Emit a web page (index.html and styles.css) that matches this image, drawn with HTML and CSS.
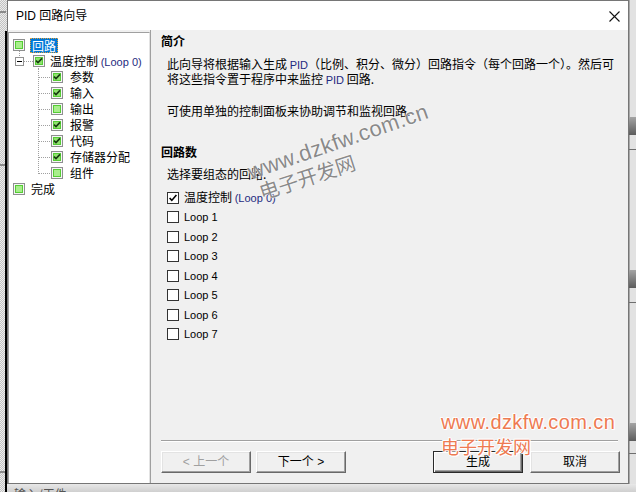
FILE: index.html
```html
<!DOCTYPE html>
<html>
<head>
<meta charset="utf-8">
<title>PID 回路向导</title>
<link rel="stylesheet" href="styles.css">
</head>
<body>
<div class="screen">
  <div class="left-strip"></div>

  <div class="dialog">
    <div class="titlebar">
      <span class="title">PID 回路向导</span>
      <svg class="close" width="11" height="11" viewBox="0 0 11 11"><path d="M0.5 0.5 L10.5 10.5 M10.5 0.5 L0.5 10.5" stroke="#111" stroke-width="1.1" fill="none"/></svg>
    </div>

    <div class="body">
      <div class="tree">
        <div class="row root first">
          <svg class="ti" width="12" height="12" viewBox="0 0 12 12"><rect x=".5" y=".5" width="11" height="11" fill="#f6f6f6" stroke="#8e8f8f"/><rect x="2" y="2" width="8" height="8" fill="#56cc36"/><rect x="3" y="3" width="6" height="6" fill="#a8ee8c"/></svg>
          <span class="label sel">回路</span>
        </div>
        <div class="row group">
          <span class="expander"></span>
          <svg class="ti" width="12" height="12" viewBox="0 0 12 12"><rect x=".5" y=".5" width="11" height="11" fill="#f6f6f6" stroke="#8e8f8f"/><rect x="2" y="2" width="8" height="8" fill="#56cc36"/><rect x="3" y="3" width="6" height="6" fill="#8fe26e"/><path d="M3 5.6 L5 7.6 L9 3.4" fill="none" stroke="#173a10" stroke-width="1.6"/></svg>
          <span class="label">温度控制 <span class="lat navy">(Loop 0)</span></span>
        </div>
        <div class="row child">
          <svg class="ti" width="12" height="12" viewBox="0 0 12 12"><rect x=".5" y=".5" width="11" height="11" fill="#f6f6f6" stroke="#8e8f8f"/><rect x="2" y="2" width="8" height="8" fill="#56cc36"/><rect x="3" y="3" width="6" height="6" fill="#8fe26e"/><path d="M3 5.6 L5 7.6 L9 3.4" fill="none" stroke="#173a10" stroke-width="1.6"/></svg>
          <span class="label">参数</span>
        </div>
        <div class="row child">
          <svg class="ti" width="12" height="12" viewBox="0 0 12 12"><rect x=".5" y=".5" width="11" height="11" fill="#f6f6f6" stroke="#8e8f8f"/><rect x="2" y="2" width="8" height="8" fill="#56cc36"/><rect x="3" y="3" width="6" height="6" fill="#8fe26e"/><path d="M3 5.6 L5 7.6 L9 3.4" fill="none" stroke="#173a10" stroke-width="1.6"/></svg>
          <span class="label">输入</span>
        </div>
        <div class="row child">
          <svg class="ti" width="12" height="12" viewBox="0 0 12 12"><rect x=".5" y=".5" width="11" height="11" fill="#f6f6f6" stroke="#8e8f8f"/><rect x="2" y="2" width="8" height="8" fill="#56cc36"/><rect x="3" y="3" width="6" height="6" fill="#a8ee8c"/></svg>
          <span class="label">输出</span>
        </div>
        <div class="row child">
          <svg class="ti" width="12" height="12" viewBox="0 0 12 12"><rect x=".5" y=".5" width="11" height="11" fill="#f6f6f6" stroke="#8e8f8f"/><rect x="2" y="2" width="8" height="8" fill="#56cc36"/><rect x="3" y="3" width="6" height="6" fill="#8fe26e"/><path d="M3 5.6 L5 7.6 L9 3.4" fill="none" stroke="#173a10" stroke-width="1.6"/></svg>
          <span class="label">报警</span>
        </div>
        <div class="row child">
          <svg class="ti" width="12" height="12" viewBox="0 0 12 12"><rect x=".5" y=".5" width="11" height="11" fill="#f6f6f6" stroke="#8e8f8f"/><rect x="2" y="2" width="8" height="8" fill="#56cc36"/><rect x="3" y="3" width="6" height="6" fill="#8fe26e"/><path d="M3 5.6 L5 7.6 L9 3.4" fill="none" stroke="#173a10" stroke-width="1.6"/></svg>
          <span class="label">代码</span>
        </div>
        <div class="row child">
          <svg class="ti" width="12" height="12" viewBox="0 0 12 12"><rect x=".5" y=".5" width="11" height="11" fill="#f6f6f6" stroke="#8e8f8f"/><rect x="2" y="2" width="8" height="8" fill="#56cc36"/><rect x="3" y="3" width="6" height="6" fill="#8fe26e"/><path d="M3 5.6 L5 7.6 L9 3.4" fill="none" stroke="#173a10" stroke-width="1.6"/></svg>
          <span class="label">存储器分配</span>
        </div>
        <div class="row child last">
          <svg class="ti" width="12" height="12" viewBox="0 0 12 12"><rect x=".5" y=".5" width="11" height="11" fill="#f6f6f6" stroke="#8e8f8f"/><rect x="2" y="2" width="8" height="8" fill="#56cc36"/><rect x="3" y="3" width="6" height="6" fill="#a8ee8c"/></svg>
          <span class="label">组件</span>
        </div>
        <div class="row root">
          <svg class="ti" width="12" height="12" viewBox="0 0 12 12"><rect x=".5" y=".5" width="11" height="11" fill="#f6f6f6" stroke="#8e8f8f"/><rect x="2" y="2" width="8" height="8" fill="#56cc36"/><rect x="3" y="3" width="6" height="6" fill="#a8ee8c"/></svg>
          <span class="label plain">完成</span>
        </div>
      </div>

      <div class="panel">
        <div class="heading">简介</div>
        <p class="desc">此向导将根据输入生成 <span class="lat navy">PID</span>（比例、积分、微分）回路指令（每个回路一个）。然后可<br>将这些指令置于程序中来监控 <span class="lat navy">PID</span> 回路.</p>
        <p class="desc d2">可使用单独的控制面板来协助调节和监视回路.</p>
        <div class="heading h2">回路数</div>
        <p class="desc d3">选择要组态的回路.</p>
        <ul class="loops">
          <li><svg class="cb" width="12" height="12" viewBox="0 0 12 12"><rect x=".5" y=".5" width="11" height="11" fill="#fff" stroke="#333"/><path d="M2.6 6 L4.8 8.4 L9.4 3" fill="none" stroke="#000" stroke-width="1.6"/></svg><span>温度控制 <span class="lat navy">(Loop 0)</span></span></li>
          <li><svg class="cb" width="12" height="12" viewBox="0 0 12 12"><rect x=".5" y=".5" width="11" height="11" fill="#fff" stroke="#333"/></svg><span class="lat">Loop 1</span></li>
          <li><svg class="cb" width="12" height="12" viewBox="0 0 12 12"><rect x=".5" y=".5" width="11" height="11" fill="#fff" stroke="#333"/></svg><span class="lat">Loop 2</span></li>
          <li><svg class="cb" width="12" height="12" viewBox="0 0 12 12"><rect x=".5" y=".5" width="11" height="11" fill="#fff" stroke="#333"/></svg><span class="lat">Loop 3</span></li>
          <li><svg class="cb" width="12" height="12" viewBox="0 0 12 12"><rect x=".5" y=".5" width="11" height="11" fill="#fff" stroke="#333"/></svg><span class="lat">Loop 4</span></li>
          <li><svg class="cb" width="12" height="12" viewBox="0 0 12 12"><rect x=".5" y=".5" width="11" height="11" fill="#fff" stroke="#333"/></svg><span class="lat">Loop 5</span></li>
          <li><svg class="cb" width="12" height="12" viewBox="0 0 12 12"><rect x=".5" y=".5" width="11" height="11" fill="#fff" stroke="#333"/></svg><span class="lat">Loop 6</span></li>
          <li><svg class="cb" width="12" height="12" viewBox="0 0 12 12"><rect x=".5" y=".5" width="11" height="11" fill="#fff" stroke="#333"/></svg><span class="lat">Loop 7</span></li>
        </ul>

        <div class="footer">
          <div class="sep"></div>
          <div class="buttons">
            <button class="btn dis">&lt; 上一个</button>
            <button class="btn next">下一个 &gt;</button>
            <span class="spacer"></span>
            <button class="btn def">生成</button>
            <button class="btn cancel">取消</button>
          </div>
        </div>
      </div>
    </div>
  </div>

  <div class="right-strip"></div>
  <div class="bottom-strip"><span>输入/工件</span></div>

  <div class="wm wm-url-c">www.dzkfw.com.cn</div>
  <div class="wm wm-cn-c">电子开发网</div>
  <div class="wm wm-url-o">www.dzkfw.com.cn</div>
  <div class="wm wm-cn-o">电子开发网</div>
</div>
</body>
</html>
```

FILE: styles.css
```css
* { box-sizing: border-box; margin: 0; padding: 0; }

body {
  margin: 0;
  width: 636px;
  height: 492px;
  overflow: hidden;
  font-family: "Liberation Sans", "Noto Sans CJK SC", sans-serif;
  font-size: 12px;
  color: #000;
  background: #dcdcdc;
}

.screen {
  position: relative;
  width: 636px;
  height: 492px;
  display: grid;
  grid-template-columns: 7px 622px 7px;
  grid-template-rows: 484px 8px;
  background: #dcdcdc;
}

/* ---------- surroundings ---------- */
.left-strip {
  grid-row: 1 / 3;
  grid-column: 1;
  background:
    linear-gradient(#000, #000) 5px 31px / 2px 100% no-repeat,
    linear-gradient(#8a8a8a, #8a8a8a) 0 11px / 6px 2px no-repeat,
    linear-gradient(#8a8a8a, #8a8a8a) 0 164px / 6px 2px no-repeat,
    linear-gradient(#8a8a8a, #8a8a8a) 0 471px / 6px 2px no-repeat,
    repeating-conic-gradient(#c2c2c2 0 25%, #ececec 0 50%) 0 0 / 2px 2px;
}

.right-strip {
  grid-row: 1 / 3;
  grid-column: 3;
  background:
    linear-gradient(#6e6e6e, #6e6e6e) 0 149px / 100% 1px no-repeat,
    linear-gradient(#6e6e6e, #6e6e6e) 0 302px / 100% 1px no-repeat,
    linear-gradient(#6e6e6e, #6e6e6e) 0 453px / 100% 1px no-repeat,
    linear-gradient(#a4a4a4, #5c5c5c) 0 117px / 100% 18px no-repeat,
    linear-gradient(#a4a4a4, #5c5c5c) 0 270px / 100% 18px no-repeat,
    linear-gradient(#a4a4a4, #5c5c5c) 0 423px / 100% 18px no-repeat,
    linear-gradient(to right, #a8a8a8 0 1px, #e2e2e2 1px);
}

.bottom-strip {
  grid-row: 2;
  grid-column: 2 / 4;
  overflow: hidden;
  background: linear-gradient(#e8e8e8, #cfcfcf);
  padding-left: 7px;
  padding-top: 3px;
  font-family: "Noto Sans CJK SC", sans-serif;
  font-size: 12px;
  line-height: 14px;
  color: #555;
}

/* ---------- dialog ---------- */
.dialog {
  grid-row: 1;
  grid-column: 2;
  border: 1px solid #767676;
  background: #f0f0f0;
  display: flex;
  flex-direction: column;
  min-height: 0;
}

.titlebar {
  height: 29px;
  flex: none;
  background: #fff;
  display: flex;
  align-items: center;
  justify-content: space-between;
  padding: 0 8px 0 8px;
}

.title {
  font-size: 12px;
  line-height: 16px;
  color: #000;
}

.close { display: block; margin-top: 1px; }

.body {
  flex: 1;
  display: flex;
  min-height: 0;
}

/* ---------- tree ---------- */
.tree {
  width: 142px;
  flex: none;
  margin-top: 2px;
  background: #fff;
  border-top: 1px solid #a0a0a0;
  border-left: 1px solid #a0a0a0;
  border-right: 1px solid #e3e3e3;
  padding-top: 4px;
  font-family: "Noto Sans CJK SC", sans-serif;
}

.row {
  height: 16px;
  display: flex;
  align-items: center;
  white-space: nowrap;
  line-height: 16px;
}

.ti { display: block; flex: none; }

.row.root { padding-left: 4px; }
.row.root .label { margin-left: 6px; }
.row.root.first .label { margin-left: 5px; }

.row.first {
  background: repeating-linear-gradient(#a0a0a0 0 1px, transparent 1px 2px) 10px 12px / 1px 4px no-repeat;
}

.label.sel {
  background: #0078d7;
  color: #fff;
  line-height: 13px;
  padding: 0 1px;
  border: 1px dotted #e0a040;
}

.row.group {
  padding-left: 6px;
  background:
    repeating-linear-gradient(#a0a0a0 0 1px, transparent 1px 2px) 10px 0 / 1px 4px no-repeat,
    repeating-linear-gradient(to right, #a0a0a0 0 1px, transparent 1px 2px) 15px 8px / 9px 1px no-repeat,
    repeating-linear-gradient(#a0a0a0 0 1px, transparent 1px 2px) 29px 13px / 1px 3px no-repeat;
}

.expander {
  width: 9px;
  height: 9px;
  flex: none;
  border: 1px solid #919191;
  background: linear-gradient(#000, #000) center / 5px 1px no-repeat, #fff;
  margin-right: 9px;
}

.row.group .label { margin-left: 5px; }

.row.child {
  padding-left: 42px;
  background:
    repeating-linear-gradient(#a0a0a0 0 1px, transparent 1px 2px) 29px 0 / 1px 16px no-repeat,
    repeating-linear-gradient(to right, #a0a0a0 0 1px, transparent 1px 2px) 30px 8px / 12px 1px no-repeat;
}

.row.child.last {
  background:
    repeating-linear-gradient(#a0a0a0 0 1px, transparent 1px 2px) 29px 0 / 1px 9px no-repeat,
    repeating-linear-gradient(to right, #a0a0a0 0 1px, transparent 1px 2px) 30px 8px / 12px 1px no-repeat;
}

.row.child .label { margin-left: 7px; }

.lat {
  font-family: "Liberation Sans", sans-serif;
  font-size: 11px;
  line-height: 12px;
}

.navy { color: #1f2a80; }

/* ---------- panel ---------- */
.panel {
  flex: 1;
  min-width: 0;
  border-left: 1px solid #a0a0a0;
  padding: 3px 10px 10px 10px;
  display: flex;
  flex-direction: column;
  font-family: "Noto Sans CJK SC", sans-serif;
}

.heading {
  font-weight: bold;
  line-height: 16px;
  height: 16px;
}

.desc {
  margin-top: 7px;
  margin-left: 6px;
  line-height: 15px;
  white-space: nowrap;
}

.desc.d2 { margin-top: 17px; }
.heading.h2 { margin-top: 26px; }
.desc.d3 { margin-top: 6px; }

.loops {
  list-style: none;
  margin-top: 7px;
  margin-left: 6px;
}

.loops li {
  height: 19.5px;
  display: flex;
  align-items: center;
  line-height: 16px;
}

.loops .lat { line-height: 16px; }

.cb { display: block; flex: none; margin-right: 5px; }

.footer { margin-top: auto; }

.sep {
  height: 2px;
  border-top: 1px solid #a0a0a0;
  border-bottom: 1px solid #fff;
}

.buttons {
  margin-top: 9px;
  margin-right: -2px;
  display: flex;
}

.spacer { flex: 1; }

.btn {
  width: 90px;
  height: 22px;
  flex: none;
  font-family: "Liberation Sans", "Noto Sans CJK SC", sans-serif;
  font-size: 12px;
  line-height: 18px;
  color: #000;
  background: #f0f0f0;
  border: 1px solid;
  border-color: #fff #696969 #696969 #fff;
  box-shadow: inset -1px -1px 0 #a0a0a0, inset 1px 1px 0 #e3e3e3;
  padding: 0;
  cursor: default;
}

.btn.next { margin-left: 5px; }
.btn.cancel { margin-left: 7px; }

.btn.dis { color: #a0a0a0; }

.btn.def {
  border-color: #2a2a2a;
  box-shadow: inset 1px 1px 0 #fff, inset -1px -1px 0 #696969, inset -2px -2px 0 #a0a0a0;
}

/* ---------- watermarks (overlay) ---------- */
.wm {
  position: absolute;
  white-space: nowrap;
  pointer-events: none;
}

.wm-url-c {
  left: 338px;
  top: 142px;
  transform: translate(-50%, -50%) rotate(-19deg);
  font-family: "Liberation Sans", sans-serif;
  font-size: 22px;
  line-height: 24px;
  letter-spacing: 0.3px;
  color: #8a8a8a;
  text-shadow: 0 0 2px #fff, 0 0 1px #fff;
}

.wm-cn-c {
  left: 307px;
  top: 177px;
  transform: translate(-50%, -50%) rotate(-18deg);
  font-family: "Noto Sans CJK SC", sans-serif;
  font-size: 20px;
  line-height: 22px;
  color: #8a8a8a;
  text-shadow: 0 0 2px #fff, 0 0 1px #fff;
}

.wm-url-o {
  left: 441px;
  top: 412px;
  font-family: "Liberation Sans", sans-serif;
  font-size: 20px;
  line-height: 20px;
  letter-spacing: 0.4px;
  color: #ee7a52;
  text-shadow: 1px 0 #fff, -1px 0 #fff, 0 1px #fff, 0 -1px #fff, 1px 1px #fff, -1px -1px #fff;
}

.wm-cn-o {
  left: 441px;
  top: 437px;
  font-family: "Noto Sans CJK SC", sans-serif;
  font-size: 18px;
  line-height: 18px;
  color: #ee7a52;
  text-shadow: 1px 0 #fff, -1px 0 #fff, 0 1px #fff, 0 -1px #fff, 1px 1px #fff, -1px -1px #fff;
}
```
